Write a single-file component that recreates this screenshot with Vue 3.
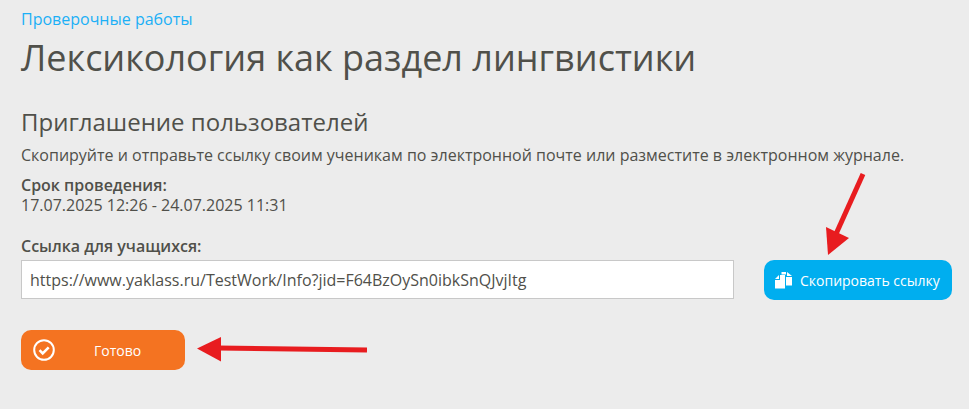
<template>
  <div class="page">
    <a class="crumb" href="#">Проверочные работы</a>
    <h1 class="title">Лексикология как раздел лингвистики</h1>
    <h2 class="subtitle">Приглашение пользователей</h2>
    <p class="hint">Скопируйте и отправьте ссылку своим ученикам по электронной почте или разместите в электронном журнале.</p>
    <div class="term">
      <div class="label">Срок проведения:</div>
      <div>17.07.2025 12:26 - 24.07.2025 11:31</div>
    </div>
    <div class="label link-label">Ссылка для учащихся:</div>
    <div class="link-row">
      <input class="link-input" type="text" readonly :value="link" />
      <button class="copy-button">
        <svg class="copy-icon" width="17" height="18" viewBox="0 0 17 18">
          <path d="M0 8L4 4V8z" fill="#fff" />
          <path d="M0 9H5V4H10V17.500H0z" fill="#fff" />
          <path d="M6.500 1H11V6H17V14.500H11V3.500H6.500z" fill="#fff" />
          <path d="M12 1L17 5H12z" fill="#fff" />
        </svg>
        Скопировать ссылку
      </button>
    </div>
    <button class="done-button">
      <svg class="done-icon" width="24" height="24" viewBox="0 0 24 24">
        <circle cx="12" cy="12" r="9.800" fill="none" stroke="#fff" stroke-width="2" />
        <path d="M7.500 12.200l3.200 3.200 6-6" fill="none" stroke="#fff" stroke-width="2.600" />
      </svg>
      <span class="done-text">Готово</span>
    </button>

    <svg class="arrows" width="969" height="409" viewBox="0 0 969 409">
      <path d="M863 174L836 234" stroke="#e81c1f" stroke-width="5" fill="none" />
      <path d="M826 227L849 238L828 255z" fill="#e81c1f" />
      <path d="M367 350L218 348" stroke="#e81c1f" stroke-width="5" fill="none" />
      <path d="M197 348.500L221 337V361.500z" fill="#e81c1f" />
    </svg>
  </div>
</template>

<script setup>
const link = 'https://www.yaklass.ru/TestWork/Info?jid=F64BzOySn0ibkSnQJvjItg'
</script>

<style>
html,
body {
  margin: 0;
  background: #ececec;
}
</style>

<style scoped>
.page {
  position: relative;
  box-sizing: border-box;
  width: 969px;
  height: 409px;
  padding: 8px 17px 0 21px;
  background: #ececec;
  color: #50504a;
  font-family: "Open Sans", "Noto Sans", sans-serif;
  font-size: 16px;
  line-height: 20px;
  overflow: hidden;
}

.crumb {
  display: block;
  color: #1cb0f6;
  line-height: 22px;
  text-decoration: none;
}

.title {
  margin: 3px 0 0;
  font-size: 36px;
  font-weight: 400;
  line-height: 50px;
}

.subtitle {
  margin: 23px 0 0;
  font-size: 24px;
  font-weight: 400;
  line-height: 32px;
}

.hint {
  margin: 6px 0 0;
  line-height: 22px;
}

.term {
  margin-top: 9px;
}

.label {
  font-weight: 600;
}

.link-label {
  margin-top: 21px;
}

.link-row {
  display: flex;
  align-items: flex-start;
  margin-top: 4px;
}

.link-input {
  box-sizing: border-box;
  flex: none;
  width: 713px;
  height: 39px;
  padding: 0 8px;
  border: 1px solid #c8c8c8;
  background: #fff;
  color: #50504a;
  font: 400 16px "Open Sans", sans-serif;
  outline: none;
}

.copy-button {
  display: flex;
  flex: none;
  align-items: center;
  gap: 8px;
  box-sizing: border-box;
  width: 188px;
  height: 40px;
  margin-left: 30px;
  padding: 0 0 0 11px;
  border: none;
  border-radius: 10px;
  background: #00aeef;
  color: #fff;
  font: 400 14px "Open Sans", sans-serif;
}

.done-button {
  display: flex;
  align-items: center;
  box-sizing: border-box;
  width: 164px;
  height: 40px;
  margin-top: 30px;
  padding: 0 0 0 11px;
  border: none;
  border-radius: 10px;
  background: #f47321;
  color: #fff;
  font: 400 14px "Open Sans", sans-serif;
}

.done-text {
  margin-left: 38px;
}

.arrows {
  position: absolute;
  top: 0;
  left: 0;
  pointer-events: none;
}
</style>
